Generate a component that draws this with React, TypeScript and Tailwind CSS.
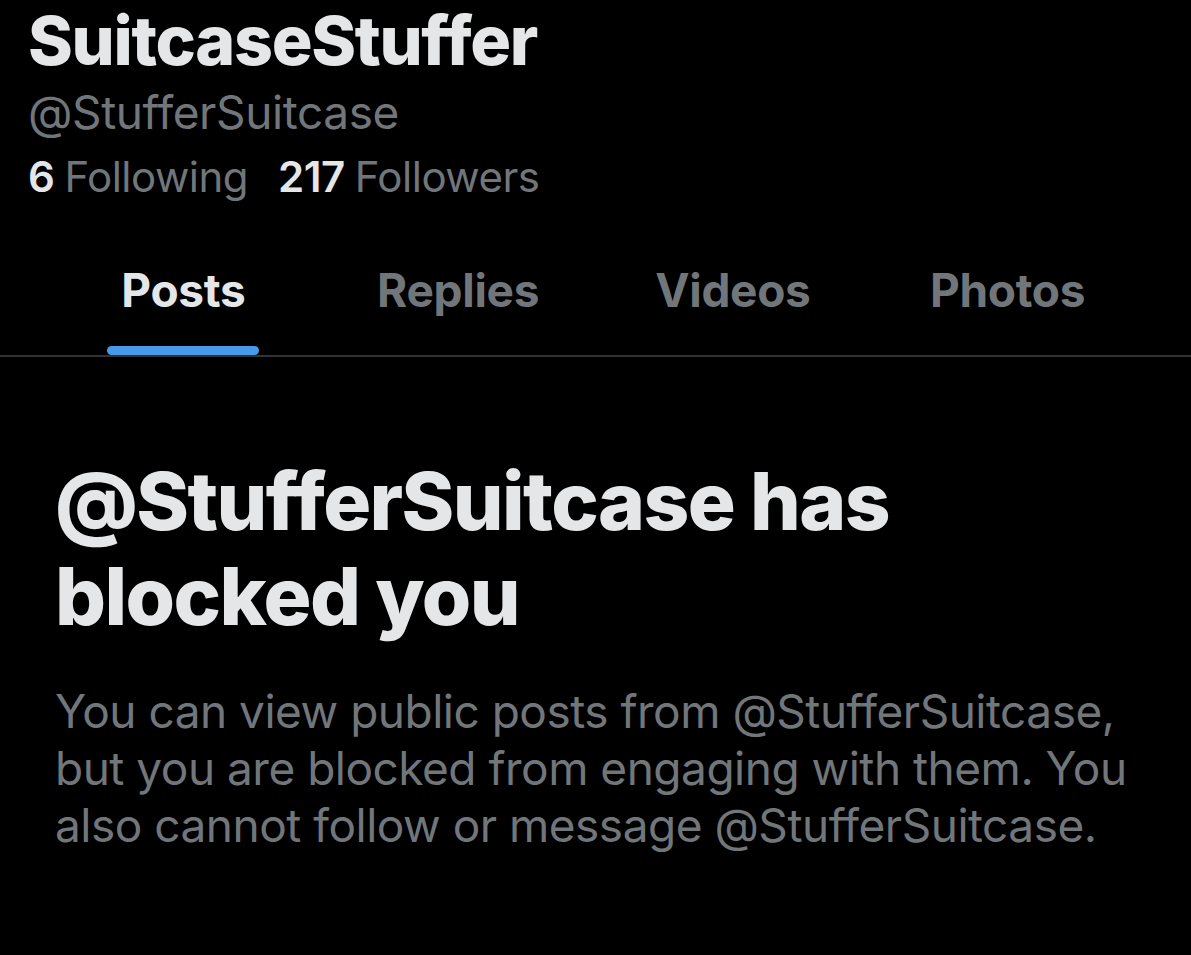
export default function App() {
    const tabs = ['Posts', 'Replies', 'Videos', 'Photos'];
    return (
        <div
            className="w-[1191px] h-[955px] bg-black overflow-hidden"
            style={{ fontFamily: 'Inter, "Noto Sans", sans-serif' }}
        >
            <div className="px-[28px] pt-[6px]">
                <div className="text-[68px] leading-[68px] font-extrabold text-[#e4e6e7] tracking-[-1.3px]">
                    SuitcaseStuffer
                </div>
                <div className="text-[46px] leading-[60px] mt-[8px] text-[#71767b] tracking-[-0.4px]">
                    @StufferSuitcase
                </div>
                <div className="flex items-baseline text-[42px] leading-[62px] mt-[4px] tracking-[-0.5px]">
                    <span className="font-semibold text-[#e4e6e7]">6</span>
                    <span className="ml-[10px] text-[#71767b]">Following</span>
                    <span className="ml-[30px] font-semibold text-[#e4e6e7]">217</span>
                    <span className="ml-[10px] text-[#71767b]">Followers</span>
                </div>
            </div>

            <div className="mt-[42px] px-[46px] flex border-b-2 border-[#2f3336]">
                {tabs.map((t, i) => (
                    <div key={t} className="flex-1 flex justify-center">
                        <div className="flex flex-col items-center">
                            <span
                                className={
                                    'text-[46px] leading-[80px] font-bold tracking-[-0.3px] ' +
                                    (i === 0 ? 'text-[#e4e6e7]' : 'text-[#71767b]')
                                }
                            >
                                {t}
                            </span>
                            {i === 0 ? (
                                <div className="mt-[16px] h-[9px] w-[152px] rounded-full bg-[#4a99e9]" />
                            ) : (
                                <div className="mt-[16px] h-[9px]" />
                            )}
                        </div>
                    </div>
                ))}
            </div>

            <div className="px-[55px] pt-[96px]">
                <h1 className="text-[80px] leading-[95px] font-extrabold text-[#e4e6e7] tracking-[-1.6px]">
                    @StufferSuitcase has
                    <br />
                    blocked you
                </h1>
                <p className="mt-[40px] text-[46px] leading-[57px] text-[#71767b] tracking-[-0.5px]">
                    You can view public posts from @StufferSuitcase,
                    <br />
                    but you are blocked from engaging with them. You
                    <br />
                    also cannot follow or message @StufferSuitcase.
                </p>
            </div>
        </div>
    );
}
